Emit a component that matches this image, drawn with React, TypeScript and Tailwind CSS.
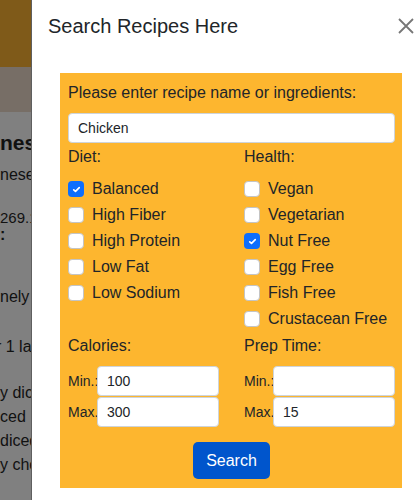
import React from "react";

function Check({ checked, label }: { checked?: boolean; label: string }) {
  return (
    <div className="flex h-[26px] items-center gap-[8px]">
      {checked ? (
        <span className="flex h-[16px] w-[16px] items-center justify-center rounded-[4px] bg-[#0d6efd]">
          <svg width="11" height="11" viewBox="0 0 20 20">
            <path d="M5 10.5l3.2 3L15 6.5" fill="none" stroke="#fff" strokeWidth="3" strokeLinecap="round" strokeLinejoin="round" />
          </svg>
        </span>
      ) : (
        <span className="h-[16px] w-[16px] rounded-[4px] border border-[#c4c4c4] bg-white" />
      )}
      <span className="text-[16px] leading-[24px]">{label}</span>
    </div>
  );
}

function RangeInput({ label, value }: { label: string; value: string }) {
  return (
    <div className="flex items-center">
      <span className="w-[29px] whitespace-nowrap text-[14px]">{label}</span>
      <div className="flex h-[30px] flex-1 items-center rounded-[4px] border border-[#ced4da] bg-white px-[9px] text-[14px]">
        {value}
      </div>
    </div>
  );
}

export default function App() {
  const diet = ["Balanced", "High Fiber", "High Protein", "Low Fat", "Low Sodium"];
  const health = ["Vegan", "Vegetarian", "Nut Free", "Egg Free", "Fish Free", "Crustacean Free"];
  return (
    <div className="flex h-[500px] w-[415px] overflow-hidden bg-white font-['Liberation_Sans',Arial,sans-serif] text-[#212529]">
      <div className="flex w-[32px] shrink-0 flex-col overflow-hidden border-r border-[#5f5f5f] bg-[#808080] text-[#111]">
        <div className="h-[67px] shrink-0 bg-[#7f5a19]" />
        <div className="h-[45px] shrink-0 bg-[#776e66]" />
        <div className="mt-[19px] whitespace-nowrap text-[21px] font-bold leading-[24px]">nese</div>
        <div className="mt-[8px] whitespace-nowrap text-[16px] leading-[24px]">nese</div>
        <div className="mt-[19px] whitespace-nowrap text-[15px] leading-[24px]">269.1</div>
        <div className="-mt-[7px] whitespace-nowrap text-[16px] font-bold leading-[24px]">:</div>
        <div className="mt-[38px] whitespace-nowrap text-[16px] leading-[24px]">nely</div>
        <div className="mt-[26px] ml-[-4px] whitespace-nowrap text-[16px] leading-[24px]">r 1 large</div>
        <div className="mt-[22px] whitespace-nowrap text-[16px] leading-[24px]">y diced</div>
        <div className="whitespace-nowrap text-[16px] leading-[24px]">ced</div>
        <div className="whitespace-nowrap text-[16px] leading-[24px]">diced</div>
        <div className="whitespace-nowrap text-[16px] leading-[24px]">y chop</div>
      </div>
      <div className="flex flex-1 flex-col">
        <div className="flex h-[52px] items-center justify-between pl-[16px] pr-[1px]">
          <span className="text-[20px] font-medium leading-[30px]">Search Recipes Here</span>
          <svg width="16" height="16" viewBox="0 0 16 16">
            <path d="M1 1L15 15M15 1L1 15" stroke="#777" strokeWidth="1.8" />
          </svg>
        </div>
        <div className="ml-[28px] mt-[21px] w-[342px] bg-[#fdb62f] pb-[9px] pl-[8px] pr-[7px] pt-[8px]">
          <div className="text-[16px] leading-[24px]">Please enter recipe name or ingredients:</div>
          <div className="mt-[8px] flex h-[30px] items-center rounded-[4px] border border-[#ced4da] bg-white px-[9px] text-[14px]">
            Chicken
          </div>
          <div className="mt-[2px] grid grid-cols-2 gap-x-[25px]">
            <div>
              <div className="text-[16px] leading-[24px]">Diet:</div>
              <div className="mt-[7px] flex flex-col">
                {diet.map((d, i) => (
                  <Check key={d} label={d} checked={i === 0} />
                ))}
              </div>
            </div>
            <div>
              <div className="text-[16px] leading-[24px]">Health:</div>
              <div className="mt-[7px] flex flex-col">
                {health.map((h) => (
                  <Check key={h} label={h} checked={h === "Nut Free"} />
                ))}
              </div>
            </div>
            <div className="mt-[2px]">
              <div className="text-[16px] leading-[24px]">Calories:</div>
              <div className="mt-[8px] flex flex-col gap-[1px]">
                <RangeInput label="Min.:" value="100" />
                <RangeInput label="Max." value="300" />
              </div>
            </div>
            <div className="mt-[2px]">
              <div className="text-[16px] leading-[24px]">Prep Time:</div>
              <div className="mt-[8px] flex flex-col gap-[1px]">
                <RangeInput label="Min.:" value="" />
                <RangeInput label="Max." value="15" />
              </div>
            </div>
          </div>
          <div className="mt-[15px] flex justify-center">
            <button className="h-[37px] w-[77px] rounded-[5px] bg-[#0055cc] text-[16px] text-white">Search</button>
          </div>
        </div>
      </div>
    </div>
  );
}
